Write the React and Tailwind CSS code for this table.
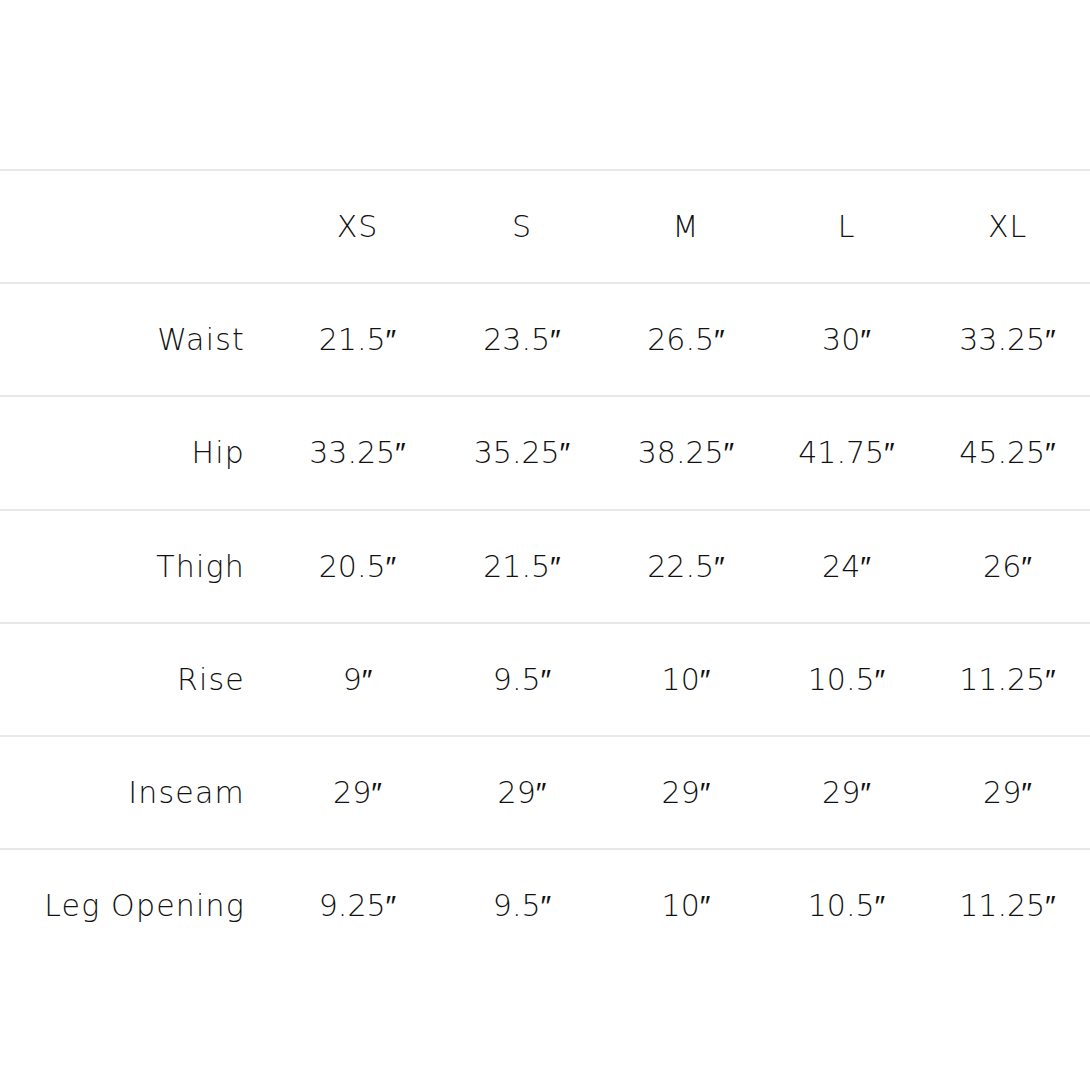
import React from "react";

const sizes = ["XS", "S", "M", "L", "XL"];
const rows = [
  ["Waist", ["21.5″", "23.5″", "26.5″", "30″", "33.25″"]],
  ["Hip", ["33.25″", "35.25″", "38.25″", "41.75″", "45.25″"]],
  ["Thigh", ["20.5″", "21.5″", "22.5″", "24″", "26″"]],
  ["Rise", ["9″", "9.5″", "10″", "10.5″", "11.25″"]],
  ["Inseam", ["29″", "29″", "29″", "29″", "29″"]],
  ["Leg Opening", ["9.25″", "9.5″", "10″", "10.5″", "11.25″"]],
];

function Row({ label, cells, header }) {
  return (
    <div className="grid grid-cols-[275px_165px_164px_164px_157px_1fr] h-[113.2px] items-center border-t-2 border-[#e8e8e8]">
      <div className="text-right pr-[30px] tracking-[0.04em]">{label}</div>
      {cells.map((c, i) => (
        <div key={i} className={`text-center ${header ? "tracking-[0.03em]" : "tracking-normal"}`}>
          {c}
        </div>
      ))}
    </div>
  );
}

export default function App() {
  return (
    <div
      className="w-[1090px] h-[1090px] bg-white pt-[169px] text-[#111111] text-[30px] font-light"
      style={{ fontFamily: "'DejaVu Sans', sans-serif" }}
    >
      <Row label="" cells={sizes} header />
      {rows.map(([l, c]) => (
        <Row key={l} label={l} cells={c} />
      ))}
    </div>
  );
}
